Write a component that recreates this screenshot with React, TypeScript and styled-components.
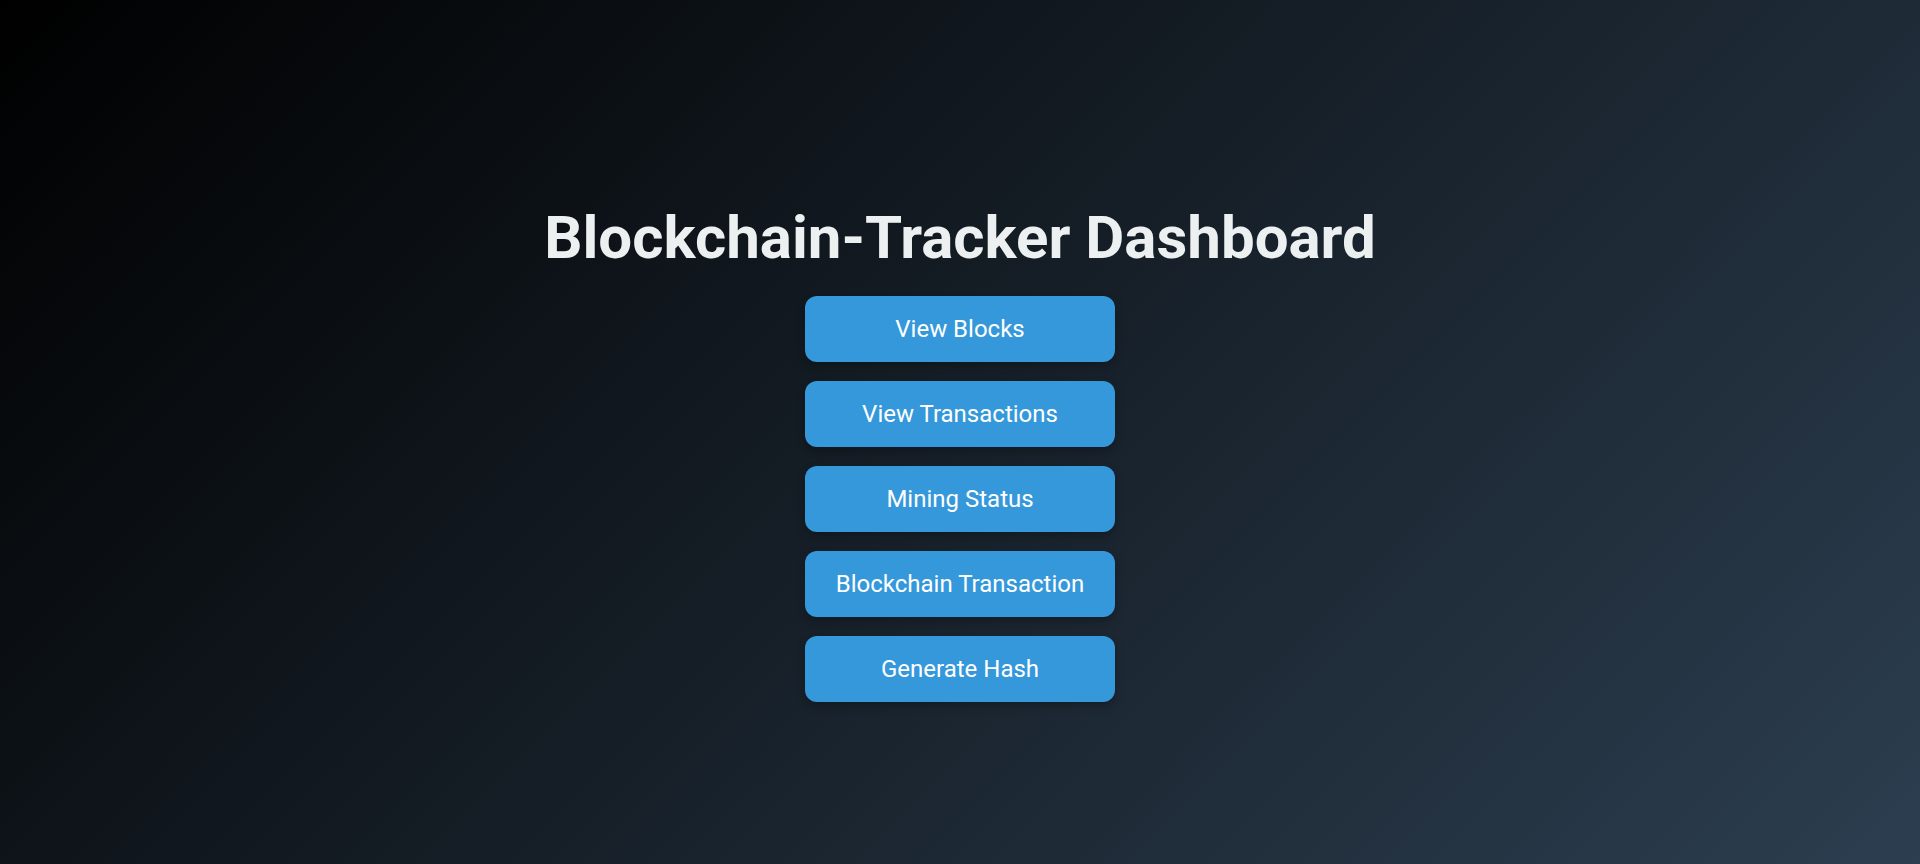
import * as React from 'react'
import styled, { createGlobalStyle } from 'styled-components'

const GlobalStyle = createGlobalStyle`
  html, body {
    margin: 0;
    padding: 0;
  }
  body {
    font-family: Roboto, 'Liberation Sans', sans-serif;
    background: #000;
  }
`

const Page = styled.div`
  min-height: 100vh;
  box-sizing: border-box;
  padding-top: 202px;
  background: linear-gradient(135deg, #000000 0%, #2c3e50 100%);
  display: flex;
  flex-direction: column;
  align-items: center;
`

const Heading = styled.h1`
  margin: 0 0 22px;
  font-family: Roboto, 'Liberation Sans', sans-serif;
  font-size: 60px;
  line-height: 1.2;
  font-weight: 700;
  color: #ecf0f1;
  text-align: center;
`

const Menu = styled.nav`
  display: flex;
  flex-direction: column;
  gap: 19px;
`

const MenuButton = styled.button`
  width: 310px;
  padding: 19px 20px;
  border: none;
  border-radius: 12px;
  background: #3498db;
  color: #fff;
  font-family: Roboto, 'Liberation Sans', sans-serif;
  font-size: 24px;
  line-height: normal;
  box-shadow: 0 4px 8px rgba(0, 0, 0, 0.25);
  cursor: pointer;
  transition: background .3s;

  &:hover {
    background: #2980b9;
  }
`

const items = [
  'View Blocks',
  'View Transactions',
  'Mining Status',
  'Blockchain Transaction',
  'Generate Hash',
]

export default function App() {
  return (
    <>
      <GlobalStyle />
      <Page>
        <Heading>Blockchain-Tracker Dashboard</Heading>
        <Menu>
          {items.map(label => (
            <MenuButton key={label}>{label}</MenuButton>
          ))}
        </Menu>
      </Page>
    </>
  )
}
